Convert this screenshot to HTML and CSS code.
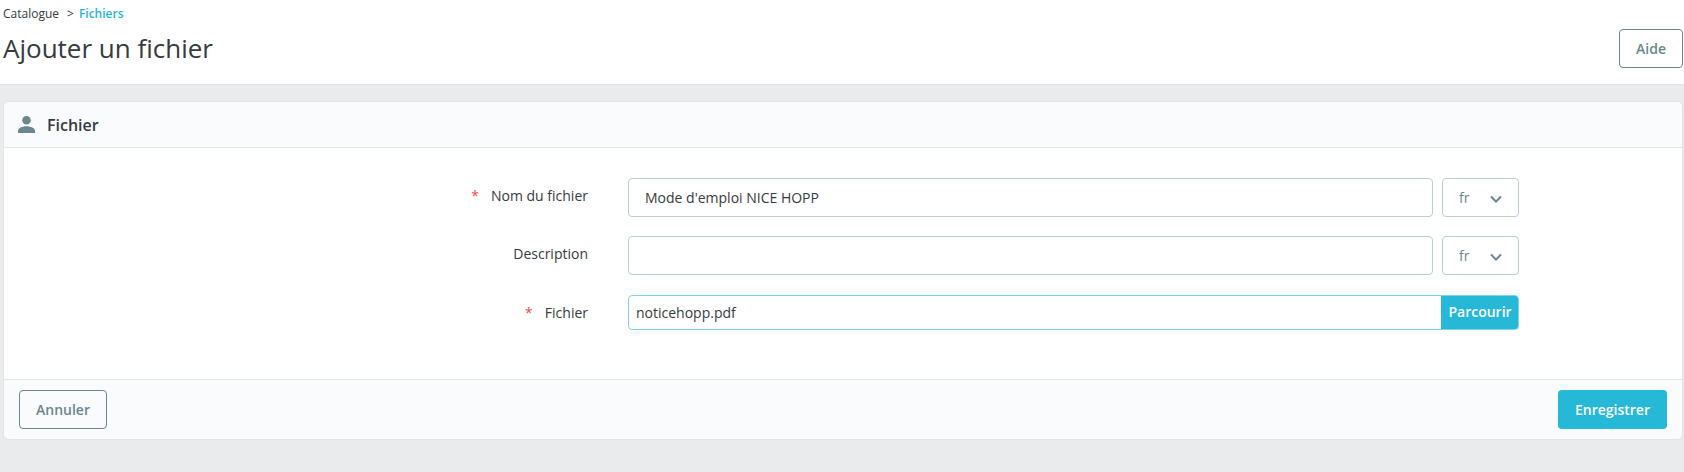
FILE: index.html
```html
<!DOCTYPE html>
<html lang="fr">
<head>
<meta charset="utf-8">
<title>Ajouter un fichier</title>
<link rel="stylesheet" href="styles.css">
</head>
<body>
<header class="page-head">
  <div class="head-main">
    <nav class="crumbs"><span>Catalogue</span><span class="sep">&gt;</span><a class="crumb-active">Fichiers</a></nav>
    <h1 class="title">Ajouter un fichier</h1>
  </div>
  <button class="btn btn-outline btn-help">Aide</button>
</header>
<main class="content">
  <section class="card">
    <div class="card-head">
      <svg class="person" viewBox="0 0 16 16"><circle cx="8" cy="4" r="4"/><path d="M0 16v-2.2C0 11 5 9.6 8 9.6s8 1.400 8 4.200V16z"/></svg>
      <span>Fichier</span>
    </div>
    <div class="card-body">
      <div class="row row-first">
        <label class="label"><span class="req">*</span>Nom du fichier</label>
        <div class="fields">
          <div class="input input-text">Mode d'emploi NICE HOPP</div>
          <div class="lang"><span>fr</span><svg class="chev" viewBox="0 0 12 8"><path d="M1 1.500l5 5 5-5"/></svg></div>
        </div>
      </div>
      <div class="row row-second">
        <label class="label">Description</label>
        <div class="fields">
          <div class="input input-text"></div>
          <div class="lang"><span>fr</span><svg class="chev" viewBox="0 0 12 8"><path d="M1 1.500l5 5 5-5"/></svg></div>
        </div>
      </div>
      <div class="row row-third">
        <label class="label label-file"><span class="req">*</span>Fichier</label>
        <div class="file">
          <span class="file-name">noticehopp.pdf</span>
          <span class="file-btn">Parcourir</span>
        </div>
      </div>
    </div>
    <div class="card-foot">
      <button class="btn btn-outline btn-cancel">Annuler</button>
      <button class="btn btn-primary">Enregistrer</button>
    </div>
  </section>
</main>
</body>
</html>
```
FILE: styles.css
```css
* { box-sizing: border-box; }
html, body { margin: 0; height: 100%; }
body {
  background: #e9ebec;
  font-family: "Open Sans", sans-serif;
  font-size: 14px;
  color: #363a41;
  overflow: hidden;
}
.page-head {
  height: 85px;
  background: #fff;
  border-bottom: 1px solid #dfe1e2;
  display: flex;
  justify-content: space-between;
  padding: 0 1px 0 3px;
}
.crumbs {
  font-size: 12px;
  line-height: 16px;
  padding-top: 6px;
}
.sep { margin: 0 5px 0 8px; }
.crumb-active { color: #25b9d7; font-weight: 600; }
.title {
  margin: 7px 0 0;
  font-size: 26px;
  font-weight: 400;
  line-height: 38px;
}
.btn {
  font-family: inherit;
  font-size: 14px;
  font-weight: 600;
  height: 39px;
  border-radius: 4px;
  padding: 0;
  background: transparent;
}
.btn-outline { border: 1px solid #6c868e; color: #6c868e; }
.btn-help { width: 64px; margin-top: 29px; }
.btn-cancel { width: 88px; }
.btn-primary { width: 109px; border: 0; background: #25b9d7; color: #fff; }
.content { padding: 17px 2px 0 4px; }
.card {
  background: #fff;
  border-radius: 5px;
  box-shadow: 0 0 2px #cfd6d9;
  height: 337px;
  display: flex;
  flex-direction: column;
  overflow: hidden;
}
.card-head {
  height: 46px;
  background: #fafbfc;
  border-bottom: 1px solid #dfe5e8;
  display: flex;
  align-items: center;
  gap: 12px;
  padding: 0 0 0 14px;
  font-size: 16px;
  font-weight: 600;
  color: #363a41;
}
.person { width: 17px; height: 17px; fill: #6c868e; }
.card-body { flex: 1; }
.row { display: flex; align-items: center; }
.row-first { margin-top: 30px; }
.row-second { margin-top: 19px; }
.row-third { margin-top: 20px; }
.label {
  width: 584px;
  text-align: right;
  font-size: 14px;
  line-height: 20px;
  color: #363a41;
  margin-top: -4px;
}
.label-file { margin-top: 0; }
.req { color: #f54c3e; margin-right: 12px; }
.fields { display: flex; gap: 9px; margin-left: 40px; }
.input {
  width: 805px;
  height: 39px;
  border: 1px solid #bbcdd2;
  border-radius: 4px;
  padding: 0 16px;
  display: flex;
  align-items: center;
  font-size: 14px;
  color: #363a41;
}
.lang {
  width: 77px;
  height: 39px;
  border: 1px solid #bbcdd2;
  border-radius: 4px;
  padding: 0 0 0 16px;
  display: flex;
  align-items: center;
  color: #6c868e;
}
.chev {
  width: 12px;
  height: 8px;
  margin-left: 21px;
  margin-top: 2px;
  fill: none;
  stroke: #6c868e;
  stroke-width: 2;
}
.file {
  margin-left: 40px;
  width: 891px;
  height: 35px;
  border: 1px solid #7cd5e7;
  border-radius: 4px;
  display: flex;
  align-items: center;
  justify-content: space-between;
  overflow: hidden;
}
.file-name { padding-left: 7px; font-size: 14px; }
.file-btn {
  width: 77px;
  height: 100%;
  background: #25b9d7;
  color: #fff;
  font-weight: 600;
  display: flex;
  align-items: center;
  justify-content: center;
  padding: 0 0 2px 1px;
}
.card-foot {
  height: 60px;
  background: #fafbfc;
  border-top: 1px solid #dfe5e8;
  display: flex;
  justify-content: space-between;
  padding: 10px 15px 0 15px;
}
```
